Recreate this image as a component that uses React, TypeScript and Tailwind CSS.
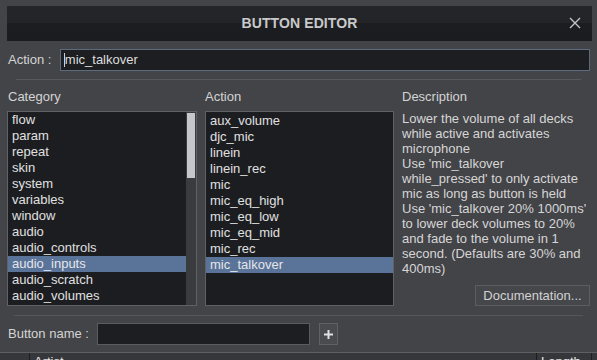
import React from "react";

const categories = [
  "flow",
  "param",
  "repeat",
  "skin",
  "system",
  "variables",
  "window",
  "audio",
  "audio_controls",
  "audio_inputs",
  "audio_scratch",
  "audio_volumes",
];

const actions = [
  "aux_volume",
  "djc_mic",
  "linein",
  "linein_rec",
  "mic",
  "mic_eq_high",
  "mic_eq_low",
  "mic_eq_mid",
  "mic_rec",
  "mic_talkover",
];

const desc = [
  "Lower the volume of all decks",
  "while active and activates",
  "microphone",
  "Use 'mic_talkover",
  "while_pressed' to only activate",
  "mic as long as button is held",
  "Use 'mic_talkover 20% 1000ms'",
  "to lower deck volumes to 20%",
  "and fade to the volume in 1",
  "second. (Defaults are 30% and",
  "400ms)",
];

function ListItem({ label, selected }: { label: string; selected?: boolean }) {
  return (
    <div
      className={
        "h-[16px] leading-[16px] pl-[4px] whitespace-nowrap " +
        (selected ? "bg-[#5a7398] text-[#e4e6ea]" : "text-[#e0e0e0]")
      }
    >
      {label}
    </div>
  );
}

export default function App() {
  return (
    <div className="w-[597px] h-[360px] overflow-hidden bg-[#434448] font-['Liberation_Sans',Arial,sans-serif] text-[13px] text-[#d4d4d4] flex flex-col">
      <div className="h-[352px] flex flex-col px-[7px] pt-[6px] shrink-0">
        {/* Title bar */}
        <div className="relative h-[35px] w-[585px] bg-[linear-gradient(#242528_0%,#232427_50%,#1c1d20_50%,#1b1c1f_100%)] flex items-center justify-center">
          <span className="text-[14px] font-bold text-[#c9c9cb] tracking-[0.1px]">BUTTON EDITOR</span>
          <svg
            className="absolute right-[11px] top-[11px]"
            width="12"
            height="12"
            viewBox="0 0 12 12"
          >
            <path d="M1 1 L11 11 M11 1 L1 11" stroke="#c4c4c6" strokeWidth="1.4" />
          </svg>
        </div>

        {/* Action row */}
        <div className="mt-[8px] h-[22px] flex items-center">
          <span className="w-[53px] pl-[1px] whitespace-nowrap">Action :</span>
          <div className="h-[22px] w-[532px] bg-[#1d1e21] border border-[#5d6b80] flex items-center pl-[3px]">
            <span className="w-px h-[14px] bg-[#d0d0d0]"></span>
            <span className="text-[#dedede]">mic_talkover</span>
          </div>
        </div>

        {/* separator */}
        <div className="mt-[8px] mx-[9px] h-px bg-[#58595d]"></div>

        {/* headers */}
        <div className="mt-[9px] h-[16px] flex leading-[16px]">
          <div className="w-[198px] pl-[1px]">Category</div>
          <div className="w-[197px]">Action</div>
          <div>Description</div>
        </div>

        {/* lists */}
        <div className="mt-[6px] h-[195px] flex gap-[8px]">
          <div className="w-[190px] h-[195px] border border-[#606165] bg-[#1c1d20] flex">
            <div className="flex-1 overflow-hidden">
              {categories.map((c) => (
                <ListItem key={c} label={c} selected={c === "audio_inputs"} />
              ))}
            </div>
            <div className="w-[10px] bg-[#3a3b3f] flex justify-center pt-px">
              <div className="w-[8px] h-[65px] bg-[#c6c7cb]"></div>
            </div>
          </div>
          <div className="w-[189px] h-[195px] border border-[#606165] bg-[#1c1d20] pt-px">
            {actions.map((a) => (
              <ListItem key={a} label={a} selected={a === "mic_talkover"} />
            ))}
          </div>
          <div className="flex-1 flex flex-col">
            <div className="leading-[15px] text-[#d6d6d6]">
              {desc.map((l, i) => (
                <div key={i} className="whitespace-nowrap">
                  {l}
                </div>
              ))}
            </div>
            <div className="mt-auto flex justify-end">
              <div className="h-[21px] w-[115px] border border-[#5c5d61] bg-[#46474b] flex items-center justify-center text-[#d2d2d2]">
                Documentation...
              </div>
            </div>
          </div>
        </div>

        {/* separator */}
        <div className="mt-[9px] mx-[7px] h-px bg-[#55565a]"></div>

        {/* Button name row */}
        <div className="mt-[7px] h-[22px] flex items-center">
          <span className="w-[90px] pl-[1px] whitespace-nowrap">Button name :</span>
          <div className="h-[22px] w-[213px] bg-[#1d1e21] border border-[#5a5b5f]"></div>
          <div className="ml-[9px] h-[22px] w-[19px] bg-[#4a4b4f] border border-[#606165] flex items-center justify-center">
            <svg width="11" height="11" viewBox="0 0 11 11">
              <path d="M5.5 1 V10 M1 5.5 H10" stroke="#e0e0e0" strokeWidth="2" />
            </svg>
          </div>
        </div>
      </div>

      {/* underlying table header strip */}
      <div className="h-px bg-[#5e5f63] shrink-0"></div>
      <div className="flex-1 bg-[#36373b] flex text-[13px] text-[#e6e6e6]">
        <div className="w-[30px] border-r border-[#1c1d20]"></div>
        <div className="w-[507px] pl-[4px] border-r border-[#1c1d20] leading-[16px] pt-[1px]">Artist</div>
        <div className="w-[55px] pl-[4px] border-r border-[#1c1d20] leading-[16px] pt-[1px]">Length</div>
      </div>
    </div>
  );
}
